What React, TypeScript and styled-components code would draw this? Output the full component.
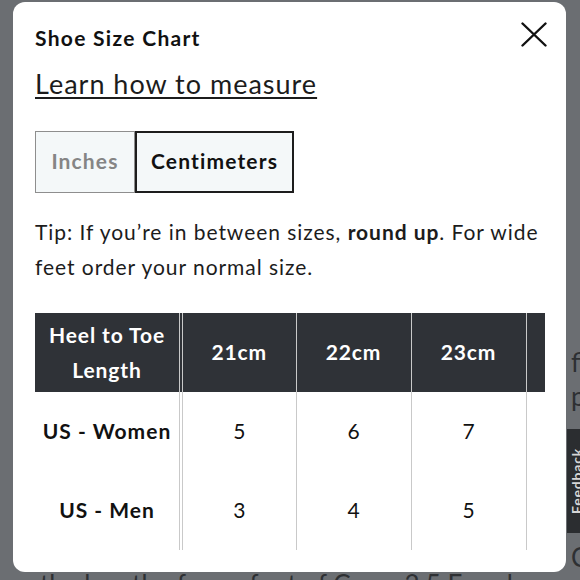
import React, { useState } from 'react'
import styled, { createGlobalStyle } from 'styled-components'

const GlobalStyle = createGlobalStyle`
  html, body {
    margin: 0;
    padding: 0;
  }
  body {
    font-family: Lato, "Open Sans", sans-serif;
    color: #1c1c1c;
  }
  * {
    box-sizing: border-box;
  }
`

const Screen = styled.div`
  position: relative;
  width: 580px;
  height: 580px;
  overflow: hidden;
  background: #6b6e72;
`

const BackPage = styled.div`
  display: flex;
  flex-direction: column;
  padding-top: 345px;
  color: #2e3033;
  font-size: 26px;
  line-height: 34px;
`

const SideLine = styled.div`
  padding-left: 571px;
  white-space: nowrap;
`

const SideGap = styled.div`
  height: 127px;
`

const FootLine = styled.div`
  margin-top: -7px;
  padding-left: 40px;
  white-space: nowrap;
`

const FeedbackTab = styled.div`
  position: absolute;
  top: 429px;
  right: -27px;
  width: 40px;
  height: 104px;
  background: #2b2d30;
  color: #d6d6d6;
  display: flex;
  align-items: center;
  justify-content: flex-start;
  padding-left: 2px;

  span {
    writing-mode: vertical-rl;
    transform: rotate(180deg);
    font-size: 14px;
    line-height: 16px;
    font-weight: 700;
    letter-spacing: 0.8px;
  }
`

const Modal = styled.div`
  position: absolute;
  top: 2px;
  left: 13px;
  width: 553px;
  height: 570px;
  background: #fff;
  border-radius: 12px;
  padding: 22px 21px 22px 22px;
  display: flex;
  flex-direction: column;
`

const Header = styled.div`
  display: flex;
  justify-content: space-between;
  align-items: flex-start;
  margin-top: -2px;
`

const Title = styled.h2`
  margin: 0;
  font-size: 21px;
  line-height: 32px;
  font-weight: 700;
  letter-spacing: 1.3px;
  color: #111;
`

const CloseButton = styled.button`
  width: 26px;
  height: 25px;
  padding: 0;
  border: 0;
  background: none;
  margin-right: -2px;
  color: #111;
  cursor: pointer;

  svg {
    display: block;
  }
`

const MeasureLink = styled.a`
  align-self: flex-start;
  margin-top: 12px;
  font-size: 27px;
  line-height: 36px;
  color: #1c1c1c;
  letter-spacing: 1px;
  text-decoration: underline;
  text-decoration-thickness: 2px;
  text-underline-offset: 3px;
`

const ToggleGroup = styled.div`
  display: flex;
  margin-top: 29px;
`

const ToggleButton = styled.button<{ $active: boolean; $width: number }>`
  width: ${(p) => p.$width}px;
  height: 62px;
  padding: 0 0 4px;
  background: #f4f8f9;
  border: ${(p) => (p.$active ? '2px solid #1d1d1d' : '1px solid #8e8e8e')};
  color: ${(p) => (p.$active ? '#111' : '#858585')};
  font-family: Lato, "Open Sans", sans-serif;
  font-size: 21px;
  font-weight: 700;
  letter-spacing: 1.15px;
  cursor: pointer;
`

const Tip = styled.p`
  margin: 21px 0 0;
  font-size: 21px;
  line-height: 35px;
  letter-spacing: 0.95px;
  color: #1c1c1c;

  strong {
    font-weight: 700;
  }
`

const TableScroll = styled.div`
  margin-top: 29px;
  width: 510px;
  overflow: hidden;
`

const Table = styled.table`
  border-collapse: collapse;
  table-layout: fixed;
  width: 606px;
`

const HeadCell = styled.th<{ $first?: boolean }>`
  height: 79px;
  padding: 0 6px 2px;
  background: #2f3237;
  color: #fff;
  font-size: 21px;
  line-height: 35px;
  font-weight: 700;
  letter-spacing: 0.9px;
  text-align: center;
  vertical-align: middle;
  border-right: ${(p) => (p.$first ? '4px double #c9c9c9' : '1px solid #c9c9c9')};
`

const BodyCell = styled.td<{ $first?: boolean }>`
  height: 79px;
  padding: 0 2px 3px;
  font-size: 21px;
  line-height: 35px;
  font-weight: ${(p) => (p.$first ? 700 : 400)};
  letter-spacing: ${(p) => (p.$first ? '1px' : '0')};
  color: #111;
  text-align: center;
  vertical-align: middle;
  white-space: nowrap;
  border-right: ${(p) => (p.$first ? '4px double #c9c9c9' : '1px solid #c9c9c9')};
`

const sizes = ['21cm', '22cm', '23cm', '24cm']
const rows = [
  { label: 'US - Women', values: ['5', '6', '7', '8'] },
  { label: 'US - Men', values: ['3', '4', '5', '6'] },
]

export default function App() {
  const [unit, setUnit] = useState<'in' | 'cm'>('cm')

  return (
    <>
      <GlobalStyle />
      <Screen>
        <BackPage>
          <SideLine>fit</SideLine>
          <SideLine>pair</SideLine>
          <SideGap />
          <SideLine>Crocs</SideLine>
          <FootLine>the length of your foot of Crocs 2.5 Euro l</FootLine>
        </BackPage>

        <FeedbackTab>
          <span>Feedback</span>
        </FeedbackTab>

        <Modal>
          <Header>
            <Title>Shoe Size Chart</Title>
            <CloseButton aria-label="close">
              <svg width="26" height="25" viewBox="0 0 26 25">
                <path
                  d="M1.5 1.5 L24.5 23.5 M24.5 1.5 L1.5 23.5"
                  stroke="currentColor"
                  strokeWidth="2.4"
                  strokeLinecap="round"
                  fill="none"
                />
              </svg>
            </CloseButton>
          </Header>

          <MeasureLink href="#">Learn how to measure</MeasureLink>

          <ToggleGroup>
            <ToggleButton $active={unit === 'in'} $width={100} onClick={() => setUnit('in')}>
              Inches
            </ToggleButton>
            <ToggleButton $active={unit === 'cm'} $width={159} onClick={() => setUnit('cm')}>
              Centimeters
            </ToggleButton>
          </ToggleGroup>

          <Tip>
            Tip: If you’re in between sizes, <strong>round up</strong>. For wide feet order your
            normal size.
          </Tip>

          <TableScroll>
            <Table>
              <colgroup>
                <col style={{ width: 146 }} />
                <col style={{ width: 115 }} />
                <col style={{ width: 115 }} />
                <col style={{ width: 115 }} />
                <col style={{ width: 115 }} />
              </colgroup>
              <thead>
                <tr>
                  <HeadCell $first>Heel to Toe Length</HeadCell>
                  {sizes.map((s) => (
                    <HeadCell key={s}>{s}</HeadCell>
                  ))}
                </tr>
              </thead>
              <tbody>
                {rows.map((r) => (
                  <tr key={r.label}>
                    <BodyCell $first>{r.label}</BodyCell>
                    {r.values.map((v, i) => (
                      <BodyCell key={i}>{v}</BodyCell>
                    ))}
                  </tr>
                ))}
              </tbody>
            </Table>
          </TableScroll>
        </Modal>
      </Screen>
    </>
  )
}
